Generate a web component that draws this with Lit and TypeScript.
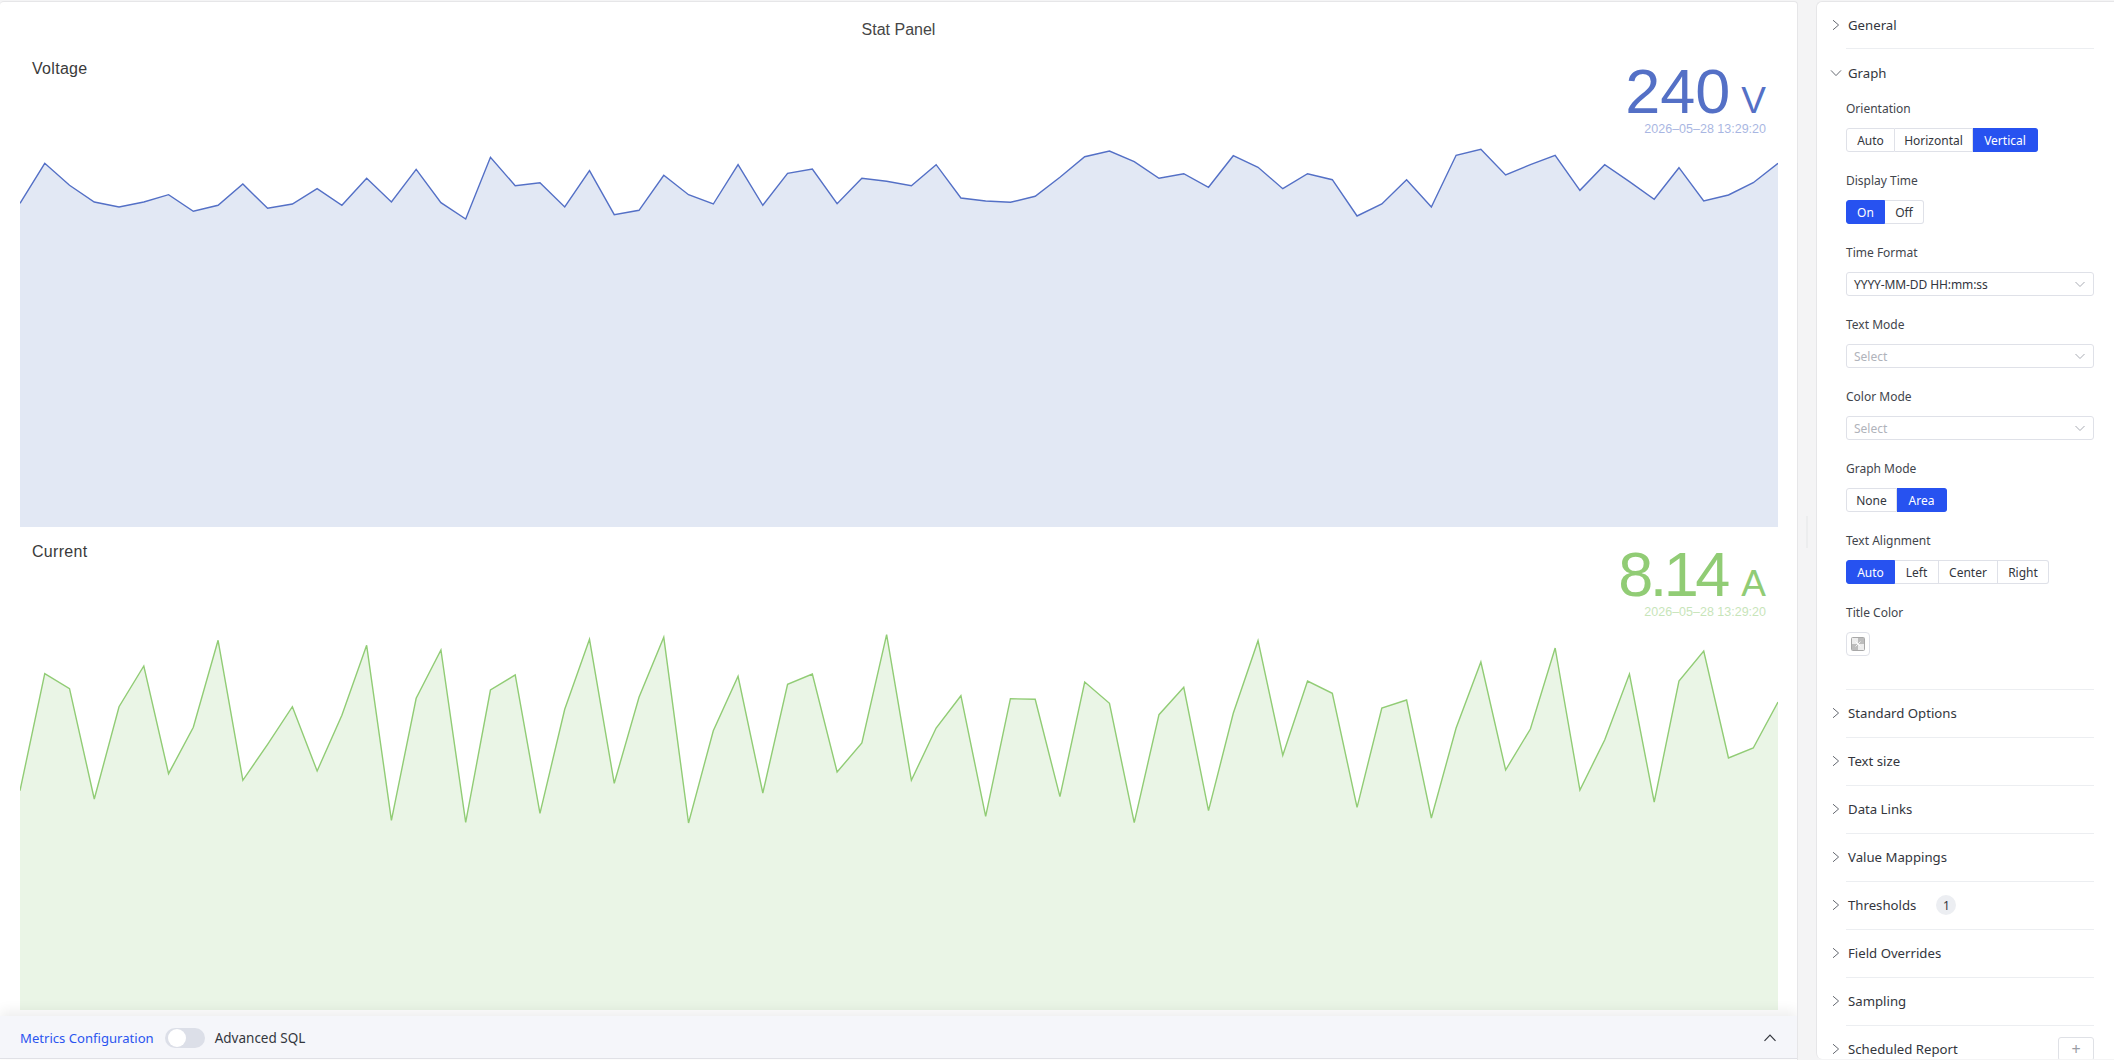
import { LitElement, html, css, svg } from "lit";
import { customElement } from "lit/decorators.js";

const CHART_W = 1758;
const STEP = CHART_W / 71;
const CHART_H = 483;

const voltageZ = [
  610, 490, 556, 606, 621, 606, 584, 634, 616, 552, 625, 612, 566, 616, 535, 606, 508, 608, 657, 472, 557, 548, 621, 512, 644, 631, 526, 584,
  612, 494, 616, 520, 507, 611, 535, 544, 557, 494, 594, 603, 607, 589, 532, 470, 453, 485, 535, 521, 562, 467, 502, 566, 521, 539, 648, 612,
  539, 621, 466, 448, 525, 494, 466, 571, 494, 545, 598, 503, 603, 585, 548, 490,
];
const voltage = voltageZ.map((z) => z / 3 - 44);

const currentZ = [
  872, 521, 566, 897, 620, 498, 821, 682, 421, 841, 733, 620, 813, 646, 436, 961, 595, 450, 967, 570, 525, 940, 628, 418, 850, 592, 412, 969,
  692, 529, 879, 553, 522, 816, 729, 404, 841, 684, 587, 949, 596, 598, 890, 546, 610, 968, 644, 562, 932, 640, 422, 766, 543, 580, 922, 624,
];
const currentTail = [700, 818, 728, 662, 770, 729, 648, 790, 740, 674, 802, 681, 651, 758, 748, 702];
const current = [...currentZ.map((z) => 500 + z / 3 - 527), ...currentTail.map((y) => y - 527)];

const chevronRight = svg`<svg class="chev" viewBox="0 0 16 16"><path d="M5 3.2 L10.6 8 L5 12.8" /></svg>`;
const chevronDown = svg`<svg class="chev" viewBox="0 0 16 16"><path d="M3 5.4 L8 10.6 L13 5.4" /></svg>`;

const SECTIONS = ["Standard Options", "Text size", "Data Links", "Value Mappings", "Thresholds", "Field Overrides", "Sampling", "Scheduled Report"];

@customElement("app-root")
export class AppRoot extends LitElement {
  static styles = css`
    :host {
      display: block;
      width: 2114px;
      height: 1060px;
      overflow: hidden;
      font-family: "Noto Sans", sans-serif;
      color: #33363d;
    }
    * { box-sizing: border-box; }
    .root {
      display: flex;
      height: 1060px;
      padding-top: 1px;
      background: #f4f4f5;
    }
    .left {
      width: 1798px;
      height: 1059px;
      display: flex;
      flex-direction: column;
      background: #fff;
      border-top: 1px solid #e6e6e8;
      border-right: 1px solid #e6e6e8;
      border-radius: 4px 4px 0 0;
      overflow: hidden;
    }
    .heading {
      height: 42px;
      flex: none;
      display: flex;
      align-items: center;
      justify-content: center;
      font: 16px "Liberation Sans", sans-serif;
      color: #464646;
      padding-top: 14px;
    }
    .stat {
      position: relative;
      height: 483px;
      flex: none;
      margin: 0 19px 0 20px;
    }
    .stat svg { display: block; }
    .stat-title {
      position: absolute;
      left: 12px;
      top: 13px;
      font: 16px/24px "Liberation Sans", sans-serif;
      letter-spacing: 0.3px;
      color: #3a3a3a;
    }
    .stat-value {
      position: absolute;
      right: 12px;
      top: 9px;
      display: flex;
      flex-direction: column;
      align-items: flex-end;
      font-family: "Liberation Sans", sans-serif;
    }
    .reading { display: flex; align-items: baseline; gap: 11px; line-height: 76px; }
    .number { font-size: 63px; }
    .number.tight { letter-spacing: -3.5px; margin-right: 3.5px; }
    .unit { font-size: 37px; }
    .stamp { font-size: 12.5px; line-height: 16px; opacity: 0.5; margin-top: -18px; }
    .bar {
      position: relative;
      z-index: 1;
      margin-top: 6px;
      height: 43px;
      flex: none;
      display: flex;
      align-items: center;
      padding: 1px 19px 0 20px;
      background: #f5f6fa;
      border-bottom: 1px solid #e0e1e6;
      box-shadow: 0 -5px 12px rgba(0, 0, 0, 0.07);
      font-size: 13.5px;
    }
    .bar-link { color: #2b55ef; font-size: 13.1px; }
    .toggle {
      width: 40px;
      height: 20px;
      margin: 0 10px 0 11px;
      padding: 1px;
      border-radius: 10px;
      background: #dcdfe8;
    }
    .knob { display: block; width: 18px; height: 18px; border-radius: 50%; background: #fff; margin-left: 2px; }
    .bar-spacer { flex: 1; }
    .bar svg { width: 16px; height: 16px; fill: none; stroke: #33363d; stroke-width: 1.2; }

    .gutter { width: 18px; flex: none; display: flex; align-items: center; justify-content: center; }
    .handle { width: 2px; height: 32px; background: #ecedee; margin-top: 2px; }

    .right {
      flex: 1;
      height: 1058px;
      background: #fff;
      border-top: 1px solid #e6e6e8;
      border-left: 1px solid #e6e6e8;
      border-radius: 6px 0 0 6px;
      overflow: hidden;
    }
    .section { margin: 0 20px 0 29px; border-bottom: 1px solid #eceef1; }
    .section:last-child { border-bottom: none; }
    .section-head {
      height: 47px;
      margin-left: -18px;
      display: flex;
      align-items: center;
      gap: 4px;
      font-size: 13.2px;
      color: #33363d;
    }
    .section.first .section-head { height: 46px; }
    .section.collapsed .section-head { padding-bottom: 1px; }
    .chev { width: 16px; height: 16px; flex: none; fill: none; stroke: #666a72; stroke-width: 1; }
    .badge {
      width: 20px;
      height: 20px;
      margin-left: 16px;
      border-radius: 50%;
      background: #eceef2;
      display: flex;
      align-items: center;
      justify-content: center;
      font-size: 12px;
    }
    .add {
      margin-left: auto;
      width: 36px;
      height: 24px;
      border: 1px solid #dfe1e6;
      border-radius: 3px;
      display: flex;
      align-items: center;
      justify-content: center;
      color: #9a9da5;
      font-size: 16px;
    }
    .body { padding: 2px 0 15px; }
    .field { margin-bottom: 18px; }
    .field-label { height: 20px; line-height: 22px; margin-bottom: 10px; font-size: 12px; color: #42454c; }
    .seg { display: inline-flex; height: 24px; vertical-align: top; }
    .seg span {
      display: flex;
      align-items: center;
      justify-content: center;
      font-size: 12px;
      color: #33363d;
      border: 1px solid #dfe1e8;
      border-left: none;
      background: #fff;
    }
    .seg span:first-child { border-left: 1px solid #dfe1e8; border-radius: 3px 0 0 3px; }
    .seg span:last-child { border-radius: 0 3px 3px 0; }
    .seg span.on { background: #2752f0; border-color: #2752f0; color: #fff; }
    .select {
      width: 248px;
      height: 24px;
      display: flex;
      align-items: center;
      justify-content: space-between;
      padding: 0 6px 0 7px;
      border: 1px solid #dfe1e8;
      border-radius: 3px;
      font-size: 12px;
      letter-spacing: -0.1px;
      color: #33363d;
    }
    .select.empty { color: #b0b3bb; letter-spacing: 0; }
    .select svg { width: 14px; height: 14px; fill: none; stroke: #a9acb4; stroke-width: 1; }
    .swatch {
      width: 24px;
      height: 24px;
      border: 1px solid #dfe1e8;
      border-radius: 4px;
      display: flex;
      align-items: center;
      justify-content: center;
    }
    .swatch svg { width: 14px; height: 14px; }
  `;

  private chart(values: number[], color: string, fill: string) {
    const pts = values.map((y, i) => `${(i * STEP).toFixed(2)},${y.toFixed(1)}`).join(" ");
    const area = `0,${CHART_H} ${pts} ${CHART_W},${CHART_H}`;
    return svg`<svg width="${CHART_W}" height="${CHART_H}" viewBox="0 0 ${CHART_W} ${CHART_H}">
      <polygon points="${area}" fill="${fill}" />
      <polyline points="${pts}" fill="none" stroke="${color}" stroke-width="1.4" stroke-linejoin="miter" />
    </svg>`;
  }

  private stat(title: string, value: string, unit: string, color: string, fill: string, values: number[]) {
    return html`<div class="stat">
      ${this.chart(values, color, fill)}
      <div class="stat-title">${title}</div>
      <div class="stat-value" style="color:${color}">
        <div class="reading">
          <span class="number ${value.includes(".") ? "tight" : ""}">${value}</span>
          <span class="unit">${unit}</span>
        </div>
        <div class="stamp">2026–05–28 13:29:20</div>
      </div>
    </div>`;
  }

  private seg(items: [string, number][], active: string) {
    return html`<div class="seg">
      ${items.map(([t, w]) => html`<span class=${t === active ? "on" : ""} style="width:${w}px">${t}</span>`)}
    </div>`;
  }

  private field(label: string, control: unknown) {
    return html`<div class="field"><div class="field-label">${label}</div>${control}</div>`;
  }

  private select(text: string, empty = false) {
    return html`<div class="select ${empty ? "empty" : ""}">
      <span>${text}</span>
      <svg viewBox="0 0 14 14"><path d="M2.5 5 L7 9.5 L11.5 5" /></svg>
    </div>`;
  }

  render() {
    return html`<div class="root">
      <div class="left">
        <div class="heading">Stat Panel</div>
        ${this.stat("Voltage", "240", "V", "#5470c6", "#e2e8f4", voltage)}
        ${this.stat("Current", "8.14", "A", "#91cc75", "#eaf5e6", current)}
        <div class="bar">
          <span class="bar-link">Metrics Configuration</span>
          <span class="toggle"><span class="knob"></span></span>
          <span>Advanced SQL</span>
          <span class="bar-spacer"></span>
          <svg viewBox="0 0 16 16"><path d="M2.5 10.8 L8 5.2 L13.5 10.8" /></svg>
        </div>
      </div>
      <div class="gutter"><div class="handle"></div></div>
      <div class="right">
        <div class="section first"><div class="section-head">${chevronRight}<span>General</span></div></div>
        <div class="section">
          <div class="section-head">${chevronDown}<span>Graph</span></div>
          <div class="body">
            ${this.field("Orientation", this.seg([["Auto", 49], ["Horizontal", 78], ["Vertical", 65]], "Vertical"))}
            ${this.field("Display Time", this.seg([["On", 39], ["Off", 39]], "On"))}
            ${this.field("Time Format", this.select("YYYY-MM-DD HH:mm:ss"))}
            ${this.field("Text Mode", this.select("Select", true))}
            ${this.field("Color Mode", this.select("Select", true))}
            ${this.field("Graph Mode", this.seg([["None", 51], ["Area", 50]], "Area"))}
            ${this.field("Text Alignment", this.seg([["Auto", 49], ["Left", 44], ["Center", 59], ["Right", 51]], "Auto"))}
            ${this.field("Title Color", html`<div class="swatch">
              <svg viewBox="0 0 14 14">
                <rect x="0.5" y="0.5" width="13" height="13" rx="1" fill="#ededed" stroke="#a8a8a8" />
                <path d="M7 1 H13 V7 H7 Z M1 7 H7 V13 H1 Z" fill="#bdbdbd" />
                <path d="M4.5 4.5 L9.5 9.5 M9.5 4.5 L4.5 9.5" stroke="#fff" stroke-width="0.8" />
              </svg>
            </div>`)}
          </div>
        </div>
        ${SECTIONS.map((s) => html`<div class="section collapsed">
          <div class="section-head">
            ${chevronRight}<span>${s}</span>
            ${s === "Thresholds" ? html`<span class="badge">1</span>` : ""}
            ${s === "Scheduled Report" ? html`<span class="add">+</span>` : ""}
          </div>
        </div>`)}
      </div>
    </div>`;
  }
}
